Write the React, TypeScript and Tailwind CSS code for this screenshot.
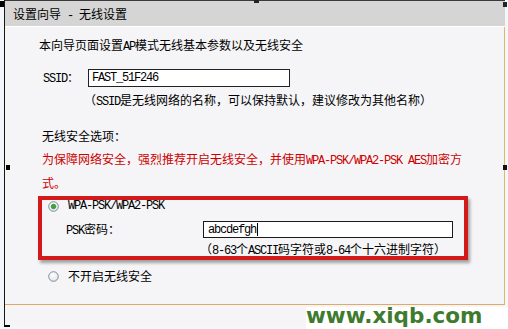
import React from "react";

const L = ({ children }: { children: React.ReactNode }) => (
  <span className="font-['Liberation_Mono',monospace] text-[12px] tracking-[-1.2px] text-black">{children}</span>
);

function Radio({ checked }: { checked?: boolean }) {
  return (
    <svg width="11" height="11" viewBox="0 0 11 11" className="shrink-0">
      <defs>
        <radialGradient id={checked ? "rg1" : "rg2"} cx="0.4" cy="0.35" r="0.7">
          <stop offset="0" stopColor="#ffffff" />
          <stop offset="1" stopColor="#dfe3e8" />
        </radialGradient>
      </defs>
      <circle cx="5.5" cy="5.5" r="4.8" fill={`url(#${checked ? "rg1" : "rg2"})`} stroke="#7f8d9a" strokeWidth="1" />
      {checked && <circle cx="5.5" cy="5.5" r="2.3" fill="#3ba63b" stroke="#227a22" strokeWidth="0.6" />}
    </svg>
  );
}

export default function App() {
  return (
    <div className="relative w-[508px] h-[329px] overflow-hidden bg-[#f3f6fa] font-['Noto_Sans_CJK_SC',sans-serif] text-[12px] text-[#000]">
      <div className="ml-[4px] w-[501px] h-[326px] border-l border-[#1c1610] flex flex-col bg-[#f5f5f7]">
        {/* header */}
        <div className="h-[27px] shrink-0 border-t border-t-[#3a3a3a] border-b border-b-white bg-[#d5d5d5] flex items-center pl-[8px] pt-[2px]">
          <span>设置向导<L> - </L>无线设置</span>
        </div>
        {/* body */}
        <div className="h-[278px] shrink-0 border-r border-b border-r-[#e3b860] border-b-[#e2a866] pl-[33px] flex flex-col">
          <div className="mt-[10px] h-[16px] leading-[16px] ml-[1px] whitespace-nowrap">
            本向导页面设置<L>AP</L>模式无线基本参数以及无线安全
          </div>
          <div className="mt-[16px] h-[18px] flex items-center">
            <div className="ml-[5px] w-[45px] whitespace-nowrap"><L>SSID</L>：</div>
            <div className="w-[202px] h-[18px] border border-[#222] bg-white flex items-center pl-[3px]">
              <L>FAST_51F246</L>
            </div>
          </div>
          <div className="mt-[5px] h-[16px] leading-[16px] ml-[46px] whitespace-nowrap">
            （<L>SSID</L>是无线网络的名称，可以保持默认，建议修改为其他名称）
          </div>
          <div className="mt-[20px] h-[16px] leading-[16px] ml-[4px]">无线安全选项：</div>
          <div className="mt-[4px] leading-[21px] ml-[4px] text-[#cc0000] whitespace-nowrap">
            为保障网络安全，强烈推荐开启无线安全，并使用<span className="font-['Liberation_Mono',monospace] text-[12px] tracking-[-1.2px]">WPA-PSK/WPA2-PSK AES</span>加密方
            <br />式。
          </div>
          <div className="mt-[3px] w-[430px] h-[64px] shrink-0 border-[4px] border-[#d21a1a] shadow-[2px_3px_3px_rgba(0,0,0,0.35)] flex flex-col">
            <div className="h-[12px] flex items-center gap-[9px] ml-[6px]">
              <Radio checked />
              <L>WPA-PSK/WPA2-PSK</L>
            </div>
            <div className="mt-[9px] h-[17px] flex items-center">
              <div className="ml-[24px] w-[137px] whitespace-nowrap"><L>PSK</L>密码：</div>
              <div className="w-[250px] h-[17px] border border-[#1a1a1a] bg-white flex items-center pl-[4px]">
                <L>abcdefgh</L>
                <div className="w-px h-[13px] bg-black ml-[1px]" />
              </div>
            </div>
            <div className="mt-[4px] h-[14px] leading-[14px] ml-[158px] whitespace-nowrap">
              （<L>8-63</L>个<L>ASCII</L>码字符或<L>8-64</L>个十六进制字符）
            </div>
          </div>
          <div className="mt-[10px] h-[12px] flex items-center gap-[9px] ml-[10px]">
            <Radio />
            <span>不开启无线安全</span>
          </div>
        </div>
      </div>

      {/* watermark */}
      <div className="absolute left-[306px] top-[307px] w-[202px] h-[22px] bg-white" />
      <div className="absolute left-[306px] top-[305px] leading-[22px] text-[21.5px] font-bold font-['DejaVu_Sans',sans-serif] text-[#3e7b2e] whitespace-nowrap">
        www.xiqb.com
      </div>

      {/* selection handles */}
      <div className="absolute left-0 top-[1px] w-[4px] h-[6px] bg-black" />
      <div className="absolute left-[254px] top-0 w-[5px] h-[3px] bg-[#222]" />
      <div className="absolute left-[503px] top-[2px] w-[4px] h-[5px] bg-[#222]" />
      <div className="absolute left-[6px] top-[165px] w-[4px] h-[5px] bg-black" />
      <div className="absolute left-[503px] top-[165px] w-[4px] h-[5px] bg-[#111]" />
      <div className="absolute left-[4px] top-[325px] w-[6px] h-[2px] bg-black" />
    </div>
  );
}
